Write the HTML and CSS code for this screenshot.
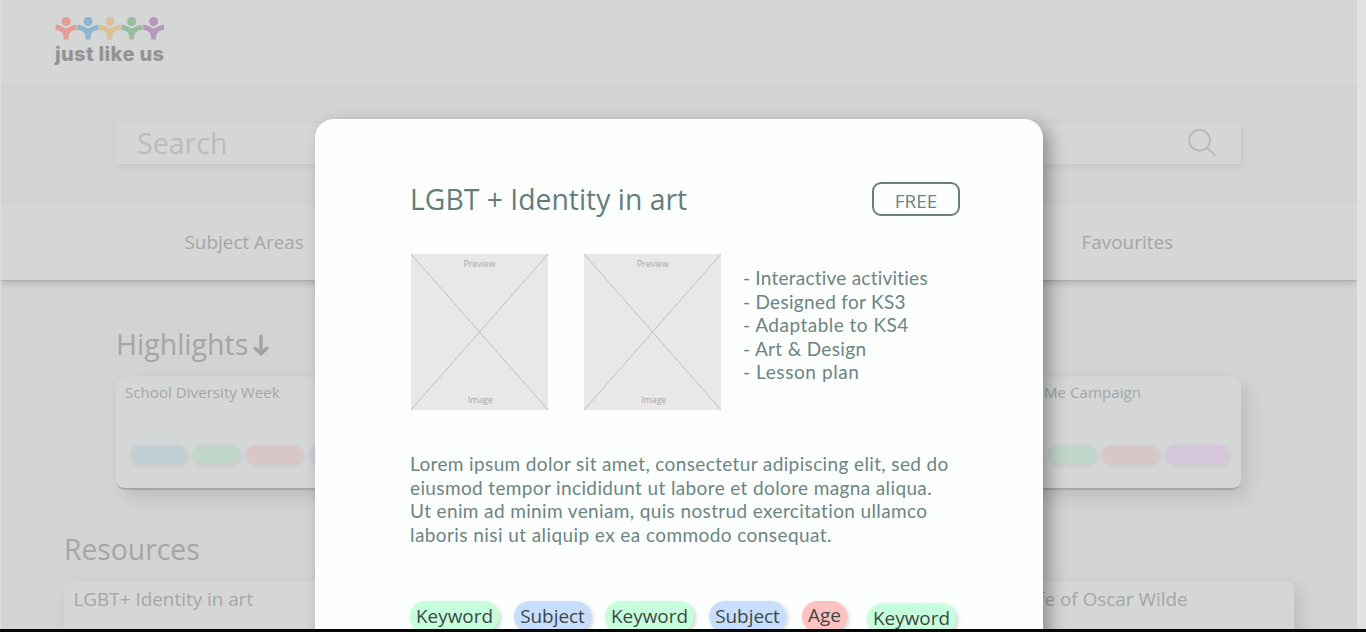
FILE: index.html
```html
<!DOCTYPE html>
<html lang="en">
<head>
<meta charset="utf-8">
<title>Just Like Us resources</title>
<link rel="stylesheet" href="styles.css">
</head>
<body>
<div class="window">
  <div class="page">
    <header class="header">
      <div class="logo">
        <svg class="logo-people" width="110" height="24" viewBox="0 0 110 24">
          <defs>
            <g id="person">
              <circle cx="10.8" cy="4.6" r="4.6"/>
              <path d="M.3 7.7C5 7.6 7.5 10.3 10.8 11.6C14 10.3 17 7.6 21.3 7.7V13C18.3 13 16 14.2 14.6 15.9C13.4 17.4 13.2 19.5 13.2 22.5H8.4C8.4 19.5 8.2 17.4 7 15.9C5.6 14.2 3.3 13 .3 13Z"/>
            </g>
          </defs>
          <use href="#person" x="0.3" fill="#e09c96"/>
          <use href="#person" x="22.2" fill="#8fb5d0"/>
          <use href="#person" x="44" fill="#dac197"/>
          <use href="#person" x="65.9" fill="#97bf9f"/>
          <use href="#person" x="87.8" fill="#b499bd"/>
        </svg>
        <div class="logo-text">just like us</div>
      </div>
    </header>
    <section class="hero">
      <div class="search">
        <span>Search</span>
        <svg width="30" height="30" viewBox="0 0 30 30" fill="none" stroke="#b7b9b8" stroke-width="1.9">
          <circle cx="12.6" cy="12.3" r="10.4"/>
          <path d="M19.8 19.5L28.2 27.8"/>
        </svg>
      </div>
    </section>
    <nav class="nav"><span>Subject Areas</span><span>Favourites</span></nav>
    <section class="highlights">
      <h2>Highlights<svg width="16" height="23" viewBox="0 0 16 23" fill="none" stroke="#a0a4a3" stroke-width="3.4" stroke-linecap="round" stroke-linejoin="round"><path d="M8 2.2V19.5M2.2 14.2L8 19.8L13.8 14.2"/></svg></h2>
      <div class="row">
        <article class="card">
          <h3>School Diversity Week</h3>
          <div class="pills"><i class="blue"></i><i class="green"></i><i class="red"></i><i class="purple"></i></div>
        </article>
        <article class="card">
          <h3 class="campaign">Me Campaign</h3>
          <div class="pills"><i class="blue"></i><i class="green"></i><i class="red"></i><i class="purple"></i></div>
        </article>
      </div>
    </section>
    <section class="resources">
      <h2>Resources</h2>
      <div class="row">
        <article class="resource">LGBT+ Identity in art</article>
        <article class="resource">Life of Oscar Wilde</article>
      </div>
    </section>
  </div>
  <div class="modal">
    <div class="modal-head"><h1>LGBT + Identity in art</h1><span class="price">FREE</span></div>
    <div class="media">
      <div class="preview"><svg viewBox="0 0 137 156" preserveAspectRatio="none"><path d="M0 0L137 156M137 0L0 156"/></svg><span>Preview</span><span class="caption">Image</span></div>
      <div class="preview"><svg viewBox="0 0 137 156" preserveAspectRatio="none"><path d="M0 0L137 156M137 0L0 156"/></svg><span>Preview</span><span class="caption">Image</span></div>
      <ul class="facts">
        <li class="f1">- Interactive activities</li>
        <li class="f2">- Designed for KS3</li>
        <li class="f3">- Adaptable to KS4</li>
        <li class="f4">- Art &amp; Design</li>
        <li class="f5">- Lesson plan</li>
      </ul>
    </div>
    <p class="copy">Lorem ipsum dolor sit amet, consectetur adipiscing elit, sed do<br>eiusmod tempor incididunt ut labore et dolore magna aliqua.<br>Ut enim ad minim veniam, quis nostrud exercitation ullamco<br><span class="last">laboris nisi ut aliquip ex ea commodo consequat.</span></p>
    <div class="tags">
      <span class="tag keyword">Keyword</span><span class="tag subject">Subject</span><span class="tag keyword">Keyword</span><span class="tag subject">Subject</span><span class="tag age">Age</span><span class="tag keyword low">Keyword</span>
    </div>
  </div>
  <div class="bezel"></div>
</div>
</body>
</html>
```
FILE: styles.css
```css
* { box-sizing: border-box; }
body {
  margin: 0;
  font-family: "Open Sans", sans-serif;
  font-size: 18.9px;
  color: #a3a6a5;
}
h1, h2, h3, p, ul { margin: 0; padding: 0; font-weight: 400; }
.window {
  position: relative;
  height: 632px;
  overflow: hidden;
  background: #e2e2e2;
}
.page {
  width: 1357px;
  height: 632px;
  overflow: hidden;
  border-left: 1px solid #dedede;
  background: #d3d3d3;
}
.header { height: 84px; padding: 16.5px 0 0 54px; background: #d5d7d6; }
.logo { width: 120px; }
.logo-people { display: block; }
.logo-text {
  font: 800 20px/24px Inter, sans-serif;
  letter-spacing: .35px;
  color: #939393;
  margin-top: 1.5px;
  white-space: nowrap;
}
.hero { height: 120px; padding: 39px 116px 0 115px; }
.search {
  height: 41px;
  display: flex;
  align-items: center;
  justify-content: space-between;
  padding: 0 24px 1px 21px;
  background: #d5d7d6;
  box-shadow: 1px 2px 6px rgba(0, 0, 0, .07);
  font-size: 28.6px;
  line-height: 38px;
  color: #babcbb;
}
.nav {
  height: 76px;
  display: flex;
  justify-content: space-between;
  padding: 0 184px 0 183.5px;
  background: #d5d7d6;
  box-shadow: 0 4px 7px -1px rgba(0, 0, 0, .16), 0 1px 1px rgba(0, 0, 0, .08);
  line-height: 76px;
  position: relative;
}
.highlights { padding: 44px 116px 0 115px; height: 248px; }
h2 { font-size: 28.5px; line-height: 40px; display: flex; }
h2 svg { margin: 10px 0 0 5px; }
.highlights .row { margin-top: 13px; }
.row { display: flex; justify-content: space-between; }
.card {
  width: 269px;
  height: 113px;
  padding: 5px 9px;
  border-radius: 9px;
  background: #d5d7d6;
  border-bottom: 2px solid #a3a9a7;
  box-shadow: 7px 7px 17px rgba(0, 0, 0, .1);
}
h3 { font-size: 15.15px; line-height: 21px; }
.campaign { padding-left: 63px; }
.pills { display: flex; margin: 42px 0 0 4.5px; }
.pills i {
  height: 19px;
  border-radius: 10px;
  box-shadow: 1px 2px 4px rgba(0, 0, 0, .07);
}
.blue { width: 57px; margin-right: 5.5px; background: #c2d0d6; }
.green { width: 48px; margin-right: 5.5px; background: #c1d6ca; }
.red { width: 57.5px; margin-right: 5.5px; background: #d9c7c7; }
.purple { width: 64px; background: #d6c6d9; }
.resources { padding: 1px 63px 0; }
.resources h2 { font-size: 28.3px; }
.resources .row { margin-top: 12px; }
.resource {
  width: 280px;
  height: 120px;
  padding-left: 9.5px;
  line-height: 36px;
  border-radius: 9px;
  background: #d5d7d6;
  box-shadow: 7px 7px 17px rgba(0, 0, 0, .1);
}
.modal {
  position: absolute;
  left: 315px;
  top: 118.6px;
  width: 728px;
  height: 540px;
  padding: 63.4px 83.5px 0 96px;
  border-radius: 19px;
  background: #fdfffe;
  box-shadow: 7px 6px 17px rgba(0, 0, 0, .33);
  color: #6c8483;
}
.modal-head { display: flex; justify-content: space-between; height: 72px; }
h1 { font-size: 28.35px; line-height: 35px; margin-left: -1px; color: #647d7c; }
.price {
  width: 88px;
  height: 34px;
  border: 2px solid #67807f;
  border-radius: 9px;
  text-align: center;
  line-height: 34px;
  padding-left: 1px;
}
.media { display: flex; }
.preview {
  position: relative;
  width: 137px;
  height: 156px;
  margin-right: 36.3px;
  padding: 4.5px 0 4px;
  display: flex;
  flex-direction: column;
  justify-content: space-between;
  align-items: center;
  background: #e8e8e8;
  color: #a6a6a6;
  font-size: 8.7px;
  line-height: 12px;
}
.preview + .preview { margin-right: 21.7px; }
.preview svg { position: absolute; inset: 0; width: 100%; height: 100%; }
.preview path { stroke: #bdbdbd; fill: none; }
.preview span { position: relative; }
.preview .caption { padding-left: 2px; }
.facts {
  list-style: none;
  padding-top: 12px;
  font: 19px/23.6px Lato, sans-serif;
  white-space: nowrap;
}
.f1 { letter-spacing: .23px; }
.f2 { letter-spacing: .3px; }
.f3 { letter-spacing: .48px; }
.f4 { letter-spacing: .33px; }
.f5 { letter-spacing: .58px; }
.copy {
  margin: 42px 0 0 -1px;
  font: 19px/23.6px Lato, sans-serif;
  letter-spacing: .37px;
  white-space: nowrap;
}
.last { letter-spacing: .42px; }
.tags { display: flex; margin: 55px 0 0 -1px; color: #3d4745; }
.tag {
  height: 31px;
  border-radius: 16px;
  line-height: 30px;
  text-align: center;
  box-shadow: 2px 2px 4px rgba(0, 0, 0, .18);
}
.keyword { width: 89px; margin-right: 15px; background: #c6ffdb; }
.subject { width: 77px; margin-right: 14px; background: #c8deff; }
.age { width: 45px; margin: 0 20px 0 2px; line-height: 29px; background: #ffc2c2; }
.low { margin: 2px 0 0; }
.bezel {
  position: absolute;
  left: 0;
  right: 0;
  bottom: 0;
  height: 3px;
  background: #060606;
}
```
